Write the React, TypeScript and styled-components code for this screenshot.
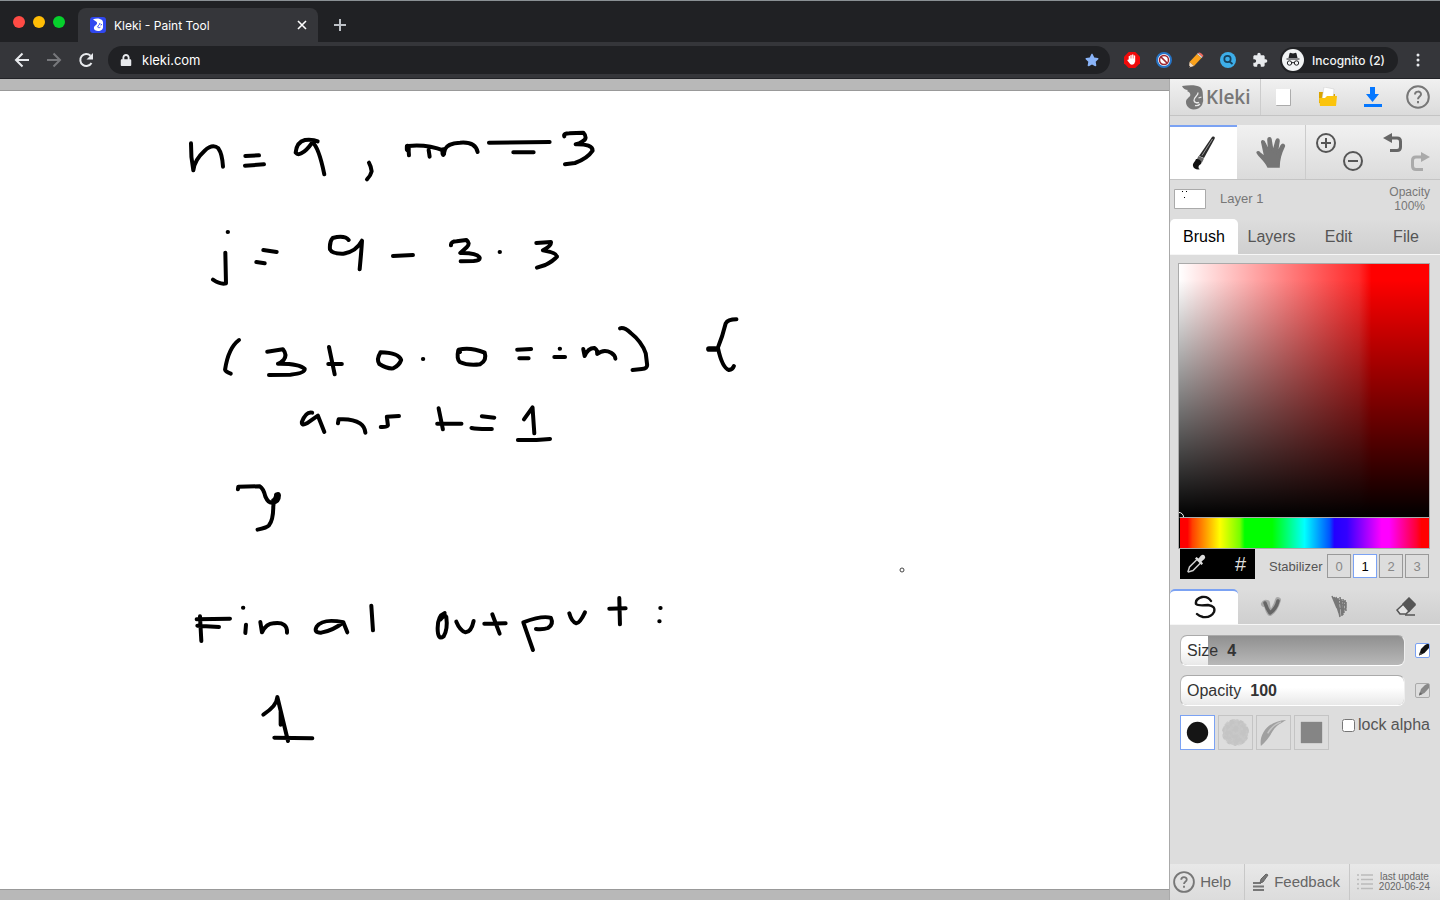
import React, { useState } from "react";
import styled, { createGlobalStyle, css } from "styled-components";
import { FaStar, FaLock } from "react-icons/fa";
import { MdExtension } from "react-icons/md";

const Global = createGlobalStyle`
  * { box-sizing: border-box; }
  body { margin: 0; background: #fff; font-family: "Liberation Sans", Arial, sans-serif; }
  button { border: 0; padding: 0; background: none; font: inherit; color: inherit; cursor: pointer; }
  svg { display: block; flex: none; }
`;

const Page = styled.div`
  display: flex;
  flex-direction: column;
  min-height: 100vh;
`;

/* ---------- browser frame ---------- */
const Browser = styled.header`
  font-family: Inter, Roboto, sans-serif;
  color: #fff;
  background: #35363a;
  border-bottom: 1px solid #222327;
`;
const TabStrip = styled.div`
  display: flex;
  align-items: center;
  height: 42px;
  background: #202124;
  border-top: 1px solid #8a9094;
`;
const Lights = styled.div`
  display: flex;
  gap: 8px;
  width: 78px;
  padding-left: 13px;
`;
const Light = styled.button<{ $color: string }>`
  width: 12px;
  height: 12px;
  border-radius: 50%;
  background: ${(p) => p.$color};
`;
const BrowserTab = styled.div`
  align-self: flex-end;
  display: flex;
  align-items: center;
  width: 240px;
  height: 34px;
  padding: 0 10px 0 12px;
  gap: 8px;
  font-size: 12px;
  background: #35363a;
  border-radius: 8px 8px 0 0;
`;
const TabTitle = styled.span`
  flex: 1;
`;
const NewTab = styled.button`
  align-self: flex-end;
  height: 34px;
  margin-left: 15px;
`;
const Toolbar = styled.div`
  display: flex;
  align-items: center;
  height: 36px;
  padding: 0 15px 0 12px;
`;
const NavButton = styled.button`
  width: 20px;
  margin-right: 12px;
  display: flex;
  justify-content: center;
`;
const Address = styled.label`
  flex: 1;
  display: flex;
  align-items: center;
  height: 28px;
  padding: 0 11px 0 12px;
  gap: 10px;
  border-radius: 14px;
  background: #202124;
`;
const AddressInput = styled.input`
  flex: 1;
  min-width: 0;
  border: 0;
  padding: 0;
  outline: 0;
  background: none;
  color: #fff;
  font: 13px Inter, Roboto, sans-serif;
`;
const Extensions = styled.div`
  display: flex;
  align-items: center;
  gap: 16px;
  padding: 0 12px 0 14px;
`;
const Incognito = styled.button`
  display: flex;
  align-items: center;
  gap: 8px;
  height: 26px;
  padding: 0 13px 0 2px;
  margin-right: 13px;
  border-radius: 13px;
  background: #202124;
  font-size: 12px;
  font-weight: 500;
  color: #f1f3f4;
`;

/* ---------- drawing area ---------- */
const Workspace = styled.main`
  flex: 1;
  display: flex;
`;
const CanvasArea = styled.section`
  flex: 1;
  min-width: 0;
  display: flex;
  padding: 11px 0 10px;
  background: #b8b8b8;
`;
const Paper = styled.div`
  flex: 1;
  min-width: 0;
  overflow: hidden;
  background: #fff;
  border-top: 1px solid #999;
  border-bottom: 1px solid #999;
`;

/* ---------- side panel ---------- */
const Panel = styled.aside`
  display: flex;
  flex-direction: column;
  width: 271px;
  background: #ddd;
  border-left: 1px solid #aaa;
  color: #555;
`;
const raised = css`
  background: linear-gradient(#f1f1f1, #dbdbdb);
  border-bottom: 1px solid #c4c4c4;
`;
const TopBar = styled.div`
  ${raised}
  display: flex;
  height: 37px;
`;
const Logo = styled.a`
  display: flex;
  align-items: center;
  width: 91px;
  padding-left: 12px;
  border-right: 1px solid #ccc;
  text-decoration: none;
  color: #777;
  font: 600 19px "Open Sans", sans-serif;
`;
const TopButton = styled.button`
  flex: 1;
  display: flex;
  align-items: center;
  justify-content: center;
`;
const Tools = styled.div`
  ${raised}
  display: flex;
  height: 55px;
  margin-top: 9px;
`;
const Tool = styled.button<{ $active?: boolean }>`
  display: flex;
  align-items: center;
  justify-content: center;
  width: ${(p) => (p.$active ? 67 : 69)}px;
  background: ${(p) => (p.$active ? "#fff" : "none")};
  border-top: ${(p) => (p.$active ? "2px solid #7ba2f3" : "0")};
  border-right: ${(p) => (p.$active ? "0" : "1px solid #ccc")};
`;
const ToolPair = styled.div`
  flex: 1;
  display: flex;
  justify-content: space-between;
  padding: 8px 10px;
`;
const PairItem = styled.button<{ $low?: boolean }>`
  align-self: ${(p) => (p.$low ? "flex-end" : "flex-start")};
`;
const LayerRow = styled.div`
  display: flex;
  align-items: center;
  height: 39px;
  padding: 0 10px 2px 4px;
  font-size: 13px;
  color: #777;
`;
const LayerName = styled.span`
  flex: 1;
  padding-left: 14px;
`;
const LayerOpacity = styled.span`
  font-size: 12px;
  line-height: 14px;
  text-align: center;
`;
const Tabs = styled.div`
  display: grid;
  grid-template-columns: 68px 67px 67px 1fr;
  height: 36px;
  background: linear-gradient(#ddd, #cfcfcf);
  border-bottom: 1px solid #f6f6f6;
`;
const PanelTab = styled.button<{ $active?: boolean; $accent?: boolean }>`
  display: flex;
  align-items: center;
  justify-content: center;
  font-size: 16px;
  color: ${(p) => (p.$active ? "#000" : "#555")};
  background: ${(p) => (p.$active ? "#fff" : "none")};
  border-radius: 5px 5px 0 0;
  border-top: ${(p) => (p.$active && p.$accent ? "2px solid #7ba2f3" : "0")};
`;
const Picker = styled.div`
  margin: 8px 10px 0 8px;
  border: 1px solid #aaa;
`;
const ColorField = styled.div`
  position: relative;
  overflow: hidden;
  height: 253px;
  background: linear-gradient(to top, #000, transparent 94%), linear-gradient(to right, #fff, #ff2a2a 72%, #f00 77%);
`;
const FieldCursor = styled.span`
  position: absolute;
  left: -5px;
  bottom: -5px;
  width: 10px;
  height: 10px;
  border: 1px solid #fff;
  border-radius: 50%;
`;
const Hue = styled.div`
  height: 31px;
  border-top: 1px solid #aaa;
  border-left: 1px solid #000;
  background: linear-gradient(to right, #f00 3%, #ff4000 5%, #ff0 16%, #7f0 24%, #0f0 26%, #0f0 37%, #0ff 50%, #05f 60%, #20f 62%, #30f 67%, #f0f 81%, #f0f 84%, #f03 95%, #f00 97%);
`;
const ColorRow = styled.div`
  display: flex;
  align-items: flex-start;
  height: 30px;
  margin: 0 11px 10px 10px;
  font-size: 13px;
`;
const Swatch = styled.div`
  display: flex;
  align-items: center;
  justify-content: space-between;
  width: 75px;
  height: 30px;
  padding: 0 9px 0 6px;
  background: #000;
  color: #ddd;
  font-size: 20px;
`;
const Stabilizer = styled.div`
  flex: 1;
  display: flex;
  align-items: center;
  gap: 2px;
  padding: 5px 0 0 14px;
`;
const StabilizerLabel = styled.span`
  flex: 1;
`;
const Level = styled.button<{ $active?: boolean }>`
  width: 24px;
  height: 24px;
  border: 1px solid ${(p) => (p.$active ? "#7ba2f3" : "#999")};
  background: ${(p) => (p.$active ? "#fff" : "none")};
  color: ${(p) => (p.$active ? "#000" : "#888")};
`;
const Settings = styled.div`
  display: flex;
  flex-direction: column;
  gap: 9px;
  padding: 10px 10px 0;
`;
const SettingRow = styled.div`
  display: flex;
  align-items: center;
  justify-content: space-between;
`;
const SliderBox = styled.label`
  position: relative;
  display: flex;
  align-items: center;
  gap: 9px;
  width: 225px;
  height: 31px;
  padding-left: 6px;
  overflow: hidden;
  border-radius: 7px;
  border: 1px solid;
  border-color: #aaa #eee #fff #bbb;
  background: linear-gradient(#909090, #b8b8b8);
  font-size: 16px;
  color: #333;
`;
const SliderFill = styled.span`
  position: absolute;
  inset: 0 auto 0 0;
  background: linear-gradient(#fff 40%, #e8e8e8);
`;
const SliderText = styled.span`
  position: relative;
`;
const SliderInput = styled.input`
  position: absolute;
  inset: 0;
  width: 100%;
  margin: 0;
  opacity: 0;
`;
const Pressure = styled.button<{ $active?: boolean }>`
  width: 15px;
  height: 15px;
  border: 1px solid ${(p) => (p.$active ? "#7ba2f3" : "#aaa")};
  border-radius: 2px;
  background: ${(p) => (p.$active ? "#fff" : "none")};
`;
const TipRow = styled.div`
  display: flex;
  align-items: flex-start;
  gap: 3px;
`;
const Tip = styled.button<{ $active?: boolean }>`
  width: 35px;
  height: 35px;
  border: 1px solid ${(p) => (p.$active ? "#7ba2f3" : "#c4c4c4")};
  background: ${(p) => (p.$active ? "#fff" : "none")};
`;
const LockAlpha = styled.label`
  flex: 1;
  display: flex;
  align-items: center;
  justify-content: flex-end;
  gap: 3px;
  font-size: 16px;
  line-height: 20px;
`;
const Check = styled.input`
  width: 13px;
  height: 13px;
  margin: 0;
`;
const Footer = styled.footer`
  display: flex;
  height: 36px;
  margin-top: auto;
  background: linear-gradient(#e8e8e8, #dcdcdc);
`;
const FooterLink = styled.a<{ $width: number; $small?: boolean }>`
  display: flex;
  align-items: center;
  justify-content: space-between;
  width: ${(p) => p.$width}px;
  padding: 0 ${(p) => (p.$small ? 10 : p.$width > 80 ? 9 : 13)}px 0 ${(p) => (p.$width > 80 ? 7 : 3)}px;
  border-right: ${(p) => (p.$small ? "0" : "1px solid #c8c8c8")};
  color: #666;
  text-decoration: none;
  text-align: center;
  font-size: ${(p) => (p.$small ? 10 : 15)}px;
  line-height: ${(p) => (p.$small ? 10 : 18)}px;
`;

/* ---------- handwriting on the canvas ---------- */
type Group = { x: number; y: number; scale: string; strokes: string[]; blots?: string[] };
const ink: Group[] = [
  {
    x: 170,
    y: 110,
    scale: ".3333",
    strokes: [
      "M63 100Q62 140 70 181Q73 150 104 122Q128 100 145 115Q157 132 159 170",
      "M226 138L267 136M225 167L282 163",
      "M443 94Q430 88 405 90Q380 96 377 128Q383 136 394 130Q410 122 427 97Q446 110 463 193",
      "M597 158Q603 168 605 184Q602 197 591 208",
      "M717 136L715 108Q770 102 822 122L820 135L825 118Q832 100 870 98Q916 94 923 126M776 120L779 140",
      "M957 98L1139 96M1030 127L1091 127",
      "M1183 79Q1180 70 1198 70L1240 68Q1255 84 1238 94Q1228 102 1217 103Q1268 102 1268 122Q1252 146 1215 159L1185 163",
      "M173 366h1M166 428L168 520Q153 525 129 509",
      "M280 420L320 426M259 456L284 460",
      "M536 390Q524 375 488 384Q478 395 480 418Q487 432 520 431Q558 426 576 392Q575 414 569 478",
      "M669 438L729 435",
      "M843 406Q842 394 860 394L889 390Q902 399 891 411L871 429Q921 428 929 443Q931 452 911 453L872 454",
      "M989 426h1",
      "M1099 399L1143 396Q1145 408 1119 421Q1160 428 1161 440Q1149 454 1126 465L1101 473",
    ],
    blots: ["M713 110v8M820 120v10"],
  },
  {
    x: 199,
    y: 300,
    scale: ".3571 .3333",
    strokes: [
      "M112 120Q82 144 73 209Q74 215 89 221",
      "M191 155L235 148Q248 165 237 180Q228 190 221 191Q281 190 296 207Q297 220 256 224L196 225",
      "M364 141L380 223M362 192L400 192",
      "M508 158Q496 178 505 192Q527 207 544 205Q561 196 566 180Q559 158 508 157",
      "M627 177h1",
      "M731 156L727 149Q760 140 800 158Q807 181 787 193Q754 198 730 186Q721 175 726 151",
      "M891 149L930 147M897 175L923 175",
      "M1010 146h1M995 171L1025 171",
      "M1076 147L1080 168Q1090 143 1108 144Q1117 151 1115 162Q1133 146 1154 158Q1165 165 1166 176",
      "M1179 85Q1191 81 1209 99Q1240 125 1251 160L1255 195Q1255 206 1240 207L1214 210",
      "M1505 58Q1481 58 1475 70Q1466 110 1453 143Q1465 204 1484 210Q1494 209 1498 198",
      "M317 338Q300 333 288 366Q287 379 302 370L333 347L351 396",
      "M389 370L391 358Q430 355 451 370Q464 379 466 398",
      "M560 348L526 350L529 376Q526 382 509 381",
      "M671 325L683 388M667 371L735 371",
      "M792 349L827 353M763 384Q782 388 820 387",
      "M910 358L934 322L939 400M893 420L945 420L983 417",
      "M109 568L110 560L170 559Q180 565 186 590Q194 610 206 608Q224 607 224 586Q222 576 215 590Q208 604 208 620Q208 660 196 676Q190 683 164 689",
    ],
    blots: ["M1428 147h18", "M218 586Q220 600 210 602"],
  },
  {
    x: 170,
    y: 570,
    scale: ".3333",
    strokes: [
      "M90 139L94 213M80 148L180 146M82 167L147 171",
      "M219 113h1M228 164L226 189",
      "M271 156L276 187Q290 159 312 160Q353 155 351 188",
      "M520 157Q459 144 440 170Q430 189 454 188Q490 181 520 157L532 187",
      "M604 107L609 181",
      "M824 129Q803 137 803 175Q803 212 821 199Q834 178 829 141Q825 132 812 148",
      "M859 155Q870 182 887 187Q904 186 911 153",
      "M967 133L989 191M943 161L1007 160",
      "M1060 157L1089 240M1060 157Q1119 135 1143 144Q1152 163 1134 174Q1121 179 1098 177",
      "M1198 130Q1205 156 1219 160Q1230 159 1245 127",
      "M1348 84L1350 163M1318 116L1367 115",
      "M1471 114h1M1468 154h1",
      "M280 434Q321 407 322 381L354 513M332 464V425M313 503L427 505",
    ],
  },
];

const Handwriting = () => (
  <svg width="1169" height="797" viewBox="0 91 1169 797" role="img" aria-label="Drawing">
    {ink.map((g) => (
      <g key={g.y} transform={`translate(${g.x} ${g.y}) scale(${g.scale})`} fill="none" stroke="#000" strokeWidth="4" strokeLinecap="round" strokeLinejoin="round">
        {g.strokes.map((d) => (
          <path key={d} d={d} vectorEffect="non-scaling-stroke" />
        ))}
        {g.blots?.map((d) => (
          <path key={d} d={d} strokeWidth="5.600" vectorEffect="non-scaling-stroke" />
        ))}
      </g>
    ))}
    <circle cx="902" cy="570" r="2" fill="#fff" stroke="#444" />
  </svg>
);

/* ---------- drawings used as icons ---------- */
const Face = () => (
  <svg width="24" height="25" viewBox="0 0 24 25">
    <path d="M0 1C6 0 14-.5 18 2c2 1.500 2.800 4 2.800 7l.4 7-1.200 4c-2 3-5 4.500-8.500 4.500C7 24 4 21 4 17c0-3 2.500-4 4-6 1-2-.5-4-3-5l1-1C3.500 5 1 3.500 0 1z" fill="currentColor" />
    <path d="M16 7.500c.5 3-4.300 4.500-4 8 .5 2.300 3 2.700 5 1.800M16.500 13l3-1M13 20.500q3 .8 5-1.500" fill="none" stroke="#e8e8e8" strokeWidth="1.300" />
  </svg>
);
const Favicon = () => (
  <svg width="16" height="16" viewBox="0 0 16 16">
    <rect width="16" height="16" rx="3" fill="#3048f0" />
    <path d="M3 2.200C6 1 10 1 12 3c1.500 1.600 1 4 1 6 .6 3-2 5-5 5-3.500 0-5-2.500-3.500-4.700C5.500 8 7.500 7.500 7 5.500 6.500 4 4.500 4 3 2.200z" fill="#fff" />
    <path d="M10 6c-.2 2-2.600 2.600-2.200 4.200.8.800 2 .5 2.600 0M10.500 8l1.500-.5" fill="none" stroke="#3048f0" />
  </svg>
);
const Question = ({ size }: { size: number }) => (
  <svg width={size} height={size} viewBox="0 0 24 24" fill="none" stroke="#777" strokeWidth="2">
    <circle cx="12" cy="12" r="10.800" />
    <path d="M9 9.500C9 5.700 15 5.700 15 9.300c0 2.200-3 2.500-3 5M12 16v2.200" />
  </svg>
);
const Zoom = ({ plus }: { plus?: boolean }) => (
  <svg width="20" height="20" viewBox="0 0 20 20" fill="none" stroke="#555" strokeWidth="2">
    <circle cx="10" cy="10" r="9" />
    <path d={plus ? "M5 10h10M10 5v10" : "M5 10h10"} />
  </svg>
);
const Turn = ({ redo }: { redo?: boolean }) => (
  <svg width="19" height="19" viewBox="0 0 19 19">
    <g transform={redo ? "translate(19 0) scale(-1 1)" : undefined}>
      <path d="M7 5h7q3.500 0 3.500 3.500v5.500q0 3.500-3.500 3.500H7" fill="none" stroke={redo ? "#aaa" : "#666"} strokeWidth="3" />
      <path d="M0 5L9 0v10z" fill={redo ? "#aaa" : "#666"} />
    </g>
  </svg>
);
const BrushIcon = () => (
  <svg width="24" height="34" viewBox="0 0 24 34">
    <path d="M20 1c2-1 3.500 0 2.500 2L12 22l-5-2z" fill="#2a2a2a" />
    <path d="M20.500 3L10 19.500" stroke="#999" />
    <path d="M6.500 20l5.500 2.500-2 4-5.500-2.500z" fill="#666" />
    <path d="M4 23c3 0 5.500 1.500 5.500 4-1 2-3 2-3 4 0 2 1 2 2 2-3 1-7 0-7.500-3C.5 27 3 26 4 23z" fill="#111" />
  </svg>
);
const HandIcon = () => (
  <svg width="30" height="34" viewBox="0 0 30 34">
    <path
      d="M12 32C10 27 4 22 2 19c-2-2 0-3 2-1l5 4L6 8c-1-3 2-3 3 0l4 9-1-12c0-3 3-3 3 0l2 12 3-11c1-3 3-2 3 0l-2 13 4-8c2-3 4-1 3 1-3 6-5 14-5 20z"
      fill="#757575"
      stroke="#757575"
      strokeWidth="1.600"
    />
  </svg>
);
const NewPage = () => (
  <svg width="17" height="20" viewBox="0 0 17 20">
    <path d="M2 3h14v16H2z" fill="#999" opacity=".5" />
    <path d="M1 2h14.500v16.500H1z" fill="#999" />
    <path d="M1 2h14v16H1z" fill="#fff" />
  </svg>
);
const Folder = () => (
  <svg width="20" height="20" viewBox="0 0 20 20">
    <path d="M1 5h5l1 2h10v9H1z" fill="#d9a300" />
    <path d="M6 0l10 2-1 10H4z" fill="#fff" stroke="#ccc" strokeWidth=".5" />
    <path d="M1 11h6l2-2h10l-1 10H2z" fill="#fbc40d" />
  </svg>
);
const Download = () => (
  <svg width="20" height="20" viewBox="0 0 20 20" fill="#0577ff">
    <path d="M7 0h5v7h4l-6.500 8L3 7h4zM1 17h18v3H1z" />
  </svg>
);
const PressurePen = ({ faded }: { faded?: boolean }) => (
  <svg width="13" height="13" viewBox="0 0 13 13">
    <path d="M3 11.500L5 5l4-4q3-2 4-.5V4L8.500 9z" fill={faded ? "#888" : "#111"} />
    <path d="M3 11.500l.8-3.300L6.500 10z" fill={faded ? "#666" : "#444"} />
  </svg>
);
const Dropper = () => (
  <svg width="20" height="20" viewBox="0 0 20 20">
    <path d="M11 5.500L3.500 13 2 17.500l.5.500L7 16.500 14.500 9" fill="none" stroke="#ccc" strokeWidth="1.500" />
    <path d="M9 4.500L10.500 3 12.500 4.500 15 1.500q2-1.500 3.500 0t0 3.500L15.500 7.500 17 9.500 15.500 11z" fill="#ddd" />
  </svg>
);

const extensionIcons = [
  {
    name: "Ad blocker",
    icon: (
      <svg width="16" height="16" viewBox="0 0 17 17">
        <path d="M5 0h7l5 5v7l-5 5H5l-5-5V5z" fill="#f00b0b" />
        <path d="M5 8V4.500q.7-1 1.300 0V7h.4V3.500q.8-1 1.500 0V7h.4V3q.8-1 1.500 0v4h.4V4q.8-1 1.400 0v6q-.4 3-3.400 3.500-2 0-3-2L3.500 9q0-1 1.500-1z" fill="#fff" />
      </svg>
    ),
  },
  {
    name: "Blocker",
    icon: (
      <svg width="16" height="16" viewBox="0 0 16 16" fill="none">
        <circle cx="8" cy="8" r="7" fill="#fff" stroke="#2675c8" strokeWidth="2" />
        <circle cx="8" cy="8" r="4.500" stroke="#9c2730" strokeWidth="1.500" />
        <path d="M5 5l6 6" stroke="#9c2730" strokeWidth="1.700" />
      </svg>
    ),
  },
  {
    name: "Pencil",
    icon: (
      <svg width="16" height="16" viewBox="0 0 16 16">
        <path d="M1.500 10L9 2l4.500 4L6 14z" fill="#fba21c" />
        <path d="M9 2l1-1 4.500 4-1 1z" fill="#ddd" />
        <path d="M10 1q1.500-1 3 .2L15 3q1 1-.5 2z" fill="#f1695f" />
        <path d="M1.500 10L6 14l-5 1.500z" fill="#f7dcc0" />
        <path d="M1 13.500l1.500 1.500-1.700.5z" fill="#333" />
      </svg>
    ),
  },
  {
    name: "Search",
    icon: (
      <svg width="16" height="16" viewBox="0 0 16 16" fill="none" stroke="#17415c" strokeWidth="1.700">
        <circle cx="8" cy="8" r="8" fill="#3daee9" stroke="none" />
        <circle cx="7.500" cy="7" r="3.200" />
        <path d="M9.500 9.500L12.500 12" />
      </svg>
    ),
  },
  { name: "Extensions", icon: <MdExtension size={16} color="#e8eaed" /> },
];

const brushTabs = [
  {
    name: "Pen",
    icon: (
      <svg width="24" height="25" viewBox="0 0 24 25" fill="none" stroke="#111" strokeWidth="2.400" strokeLinecap="round">
        <path d="M19 6Q16 1 10 2Q3 4 4 9Q6 11 16 10Q24 11 22 17Q19 23 11 22Q7 21 5 19" />
      </svg>
    ),
  },
  {
    name: "Blend",
    icon: (
      <svg width="24" height="24" viewBox="0 0 24 24" fill="none" strokeLinecap="round" strokeLinejoin="round">
        <path d="M4 9Q5 7 7 8Q7 14 10 18Q15 15 18 5" stroke="#888" strokeWidth="6" opacity=".6" />
        <path d="M5 8Q7 14 10 18Q16 14 18 6" stroke="#666" strokeWidth="3.500" />
      </svg>
    ),
  },
  {
    name: "Sketchy",
    icon: (
      <svg width="24" height="24" viewBox="0 0 24 24" fill="none" stroke="#777" strokeWidth="1.500">
        <path d="M5 1l5 12M7 2l5 16M9 2l4 20M11 3l2 18M13 2l2 19M14 4l2 16M16 4l1 14M18 5l1 11M19 7v6M6 3l12 4M8 7l11 3M10 13l9 1" />
      </svg>
    ),
  },
  {
    name: "Eraser",
    icon: (
      <svg width="22" height="20" viewBox="0 0 22 20" fill="none" stroke="#555" strokeWidth="1.500">
        <path d="M2 13L14 2l6 6L11 17H5z" fill="#e5e5e5" />
        <path d="M8 7l6-6 6 6-6 7z" fill="#555" />
        <path d="M10 18h10" />
      </svg>
    ),
  },
];

const tips = [
  { name: "Round", icon: <circle cx="17" cy="17" r="11" fill="#151515" /> },
  {
    name: "Chalk",
    icon: (
      <>
        <filter id="chalk">
          <feTurbulence type="fractalNoise" baseFrequency=".25" numOctaves="3" seed="4" />
          <feColorMatrix values="0 0 0 0 .55  0 0 0 0 .55  0 0 0 0 .55  3.500 0 0 0 -1.100" />
          <feComposite in2="SourceGraphic" operator="in" />
        </filter>
        <circle cx="17" cy="17" r="13" fill="#999" opacity=".3" />
        <circle cx="17" cy="17" r="14" fill="#999" filter="url(#chalk)" />
      </>
    ),
  },
  {
    name: "Calligraphy",
    icon: (
      <g>
        <path d="M4 31C2 19 11 5 30 4c-6 4-9 5-12 9-4 6-8 13-14 18z" fill="#a0a0a0" />
        <path d="M11 18Q16 9 25 6" fill="none" stroke="#c4c4c4" strokeWidth="1.500" />
      </g>
    ),
  },
  { name: "Square", icon: <path d="M6 6h22v22H6z" fill="#858585" /> },
];

const Slider = ({ label, value, max, fill }: { label: string; value: number; max: number; fill: number }) => (
  <SliderBox>
    <SliderFill style={{ width: `${fill}%` }} />
    <SliderText>{label}</SliderText>
    <SliderText as="b">{value}</SliderText>
    <SliderInput type="range" min={0} max={max} defaultValue={value} />
  </SliderBox>
);

export default function App() {
  const [level, setLevel] = useState(1);
  const [tip, setTip] = useState("Round");
  return (
    <Page>
      <Global />
      <Browser>
        <TabStrip>
          <Lights>
            <Light $color="#ff4b45" aria-label="Close" />
            <Light $color="#ffbd05" aria-label="Minimise" />
            <Light $color="#06d02c" aria-label="Zoom" />
          </Lights>
          <BrowserTab>
            <Favicon />
            <TabTitle>Kleki - Paint Tool</TabTitle>
            <button aria-label="Close tab">
              <svg width="12" height="12" viewBox="0 0 12 12" stroke="#fff" strokeWidth="1.600">
                <path d="M2 2l8 8M10 2l-8 8" />
              </svg>
            </button>
          </BrowserTab>
          <NewTab aria-label="New tab">
            <svg width="14" height="14" viewBox="0 0 14 14" stroke="#bdc1c6" strokeWidth="2">
              <path d="M1 7h12M7 1v12" />
            </svg>
          </NewTab>
        </TabStrip>
        <Toolbar>
          <NavButton aria-label="Back">
            <svg width="16" height="16" viewBox="0 0 16 16" fill="none" stroke="#e8eaed" strokeWidth="2">
              <path d="M15 8H2M8.500 1.500L2 8l6.500 6.500" />
            </svg>
          </NavButton>
          <NavButton aria-label="Forward">
            <svg width="16" height="16" viewBox="0 0 16 16" fill="none" stroke="#77787c" strokeWidth="2">
              <path d="M1 8h13M7.500 1.500L14 8l-6.500 6.500" />
            </svg>
          </NavButton>
          <NavButton aria-label="Reload">
            <svg width="16" height="16" viewBox="0 0 16 16">
              <path d="M13.500 11A6 6 0 1 1 12.500 3.700" fill="none" stroke="#e8eaed" strokeWidth="2" />
              <path d="M15 1v6.500H8.500z" fill="#e8eaed" />
            </svg>
          </NavButton>
          <Address>
            <FaLock size={12} color="#e8eaed" />
            <AddressInput aria-label="Address" defaultValue="kleki.com" />
            <FaStar size={14} color="#8ab4f8" />
          </Address>
          <Extensions>
            {extensionIcons.map((e) => (
              <button key={e.name} aria-label={e.name}>
                {e.icon}
              </button>
            ))}
          </Extensions>
          <Incognito>
            <svg width="22" height="22" viewBox="0 0 22 22">
              <circle cx="11" cy="11" r="11" fill="#f1f3f4" />
              <path d="M7.500 4.500Q8 3.500 9 4l2 .5 2-.5q1-.5 1.500.5l1 4.500h-9zM4.500 9.500h13v1h-13z" fill="#202124" />
              <g fill="none" stroke="#202124">
                <circle cx="7.500" cy="14" r="2.200" />
                <circle cx="14.500" cy="14" r="2.200" />
                <path d="M9.500 14q1.500-1 3 0" />
              </g>
            </svg>
            Incognito (2)
          </Incognito>
          <button aria-label="Menu">
            <svg width="14" height="14" viewBox="0 0 14 14" fill="#e8eaed">
              <circle cx="7" cy="2" r="1.500" />
              <circle cx="7" cy="7" r="1.500" />
              <circle cx="7" cy="12" r="1.500" />
            </svg>
          </button>
        </Toolbar>
      </Browser>

      <Workspace>
        <CanvasArea>
          <Paper>
            <Handwriting />
          </Paper>
        </CanvasArea>
        <Panel>
          <TopBar>
            <Logo href="#">
              <Face />
              Kleki
            </Logo>
            <TopButton aria-label="New"><NewPage /></TopButton>
            <TopButton aria-label="Open"><Folder /></TopButton>
            <TopButton aria-label="Save"><Download /></TopButton>
            <TopButton aria-label="Help"><Question size={24} /></TopButton>
          </TopBar>
          <Tools>
            <Tool $active aria-label="Brush tool"><BrushIcon /></Tool>
            <Tool aria-label="Hand tool"><HandIcon /></Tool>
            <ToolPair>
              <PairItem aria-label="Zoom in"><Zoom plus /></PairItem>
              <PairItem $low aria-label="Zoom out"><Zoom /></PairItem>
            </ToolPair>
            <ToolPair>
              <PairItem aria-label="Undo"><Turn /></PairItem>
              <PairItem $low aria-label="Redo"><Turn redo /></PairItem>
            </ToolPair>
          </Tools>
          <LayerRow>
            <svg width="32" height="20" viewBox="0 0 32 20">
              <path d="M.5.500h31v19H.5z" fill="#fff" stroke="#aaa" />
              <path d="M8 2h1v1H8zM12 2h1v1h-1zM10 8h1v1h-1z" />
            </svg>
            <LayerName>Layer 1</LayerName>
            <LayerOpacity>
              Opacity
              <br />
              100%
            </LayerOpacity>
          </LayerRow>
          <Tabs>
            <PanelTab $active>Brush</PanelTab>
            <PanelTab>Layers</PanelTab>
            <PanelTab>Edit</PanelTab>
            <PanelTab>File</PanelTab>
          </Tabs>
          <Picker>
            <ColorField><FieldCursor /></ColorField>
            <Hue />
          </Picker>
          <ColorRow>
            <Swatch>
              <button aria-label="Pick colour"><Dropper /></button>
              <button aria-label="Hex colour">#</button>
            </Swatch>
            <Stabilizer>
              <StabilizerLabel>Stabilizer</StabilizerLabel>
              {[0, 1, 2, 3].map((n) => (
                <Level key={n} $active={n === level} onClick={() => setLevel(n)}>{n}</Level>
              ))}
            </Stabilizer>
          </ColorRow>
          <Tabs>
            {brushTabs.map((b, i) => (
              <PanelTab key={b.name} $active={i === 0} $accent aria-label={b.name}>{b.icon}</PanelTab>
            ))}
          </Tabs>
          <Settings>
            <SettingRow>
              <Slider label="Size" value={4} max={100} fill={12} />
              <Pressure $active aria-label="Size by pressure"><PressurePen /></Pressure>
            </SettingRow>
            <SettingRow>
              <Slider label="Opacity" value={100} max={100} fill={100} />
              <Pressure aria-label="Opacity by pressure"><PressurePen faded /></Pressure>
            </SettingRow>
            <TipRow>
              {tips.map((t) => (
                <Tip key={t.name} $active={t.name === tip} aria-label={t.name} onClick={() => setTip(t.name)}>
                  <svg width="33" height="33" viewBox="0 0 34 34">{t.icon}</svg>
                </Tip>
              ))}
              <LockAlpha>
                <Check type="checkbox" />
                lock alpha
              </LockAlpha>
            </TipRow>
          </Settings>
          <Footer>
            <FooterLink href="#" $width={75}>
              <Question size={22} />
              Help
            </FooterLink>
            <FooterLink href="#" $width={105}>
              <svg width="18" height="18" viewBox="0 0 18 18" fill="none" stroke="#777" strokeWidth="1.800">
                <path d="M1 10h8M1 13.500h11M1 17h11" />
                <path d="M8 10l1-4 5-5 2 1-5 7z" fill="#777" stroke="#666" strokeWidth="1" />
              </svg>
              Feedback
            </FooterLink>
            <FooterLink href="#" $width={90} $small>
              <svg width="16" height="16" viewBox="0 0 16 16" stroke="#bbb" strokeWidth="1.500">
                <path d="M0 1h2M4 1h12M0 5.500h2M4 5.500h12M0 10h2M4 10h12M0 14.500h2M4 14.500h12" />
              </svg>
              <span>
                last update
                <br />
                2020-06-24
              </span>
            </FooterLink>
          </Footer>
        </Panel>
      </Workspace>
    </Page>
  );
}
